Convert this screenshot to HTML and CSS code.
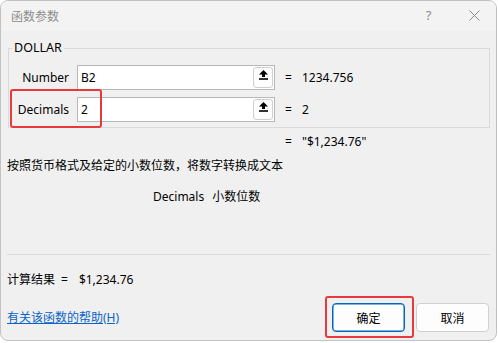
FILE: index.html
```html
<!DOCTYPE html>
<html lang="zh-CN">
<head>
<meta charset="utf-8">
<title>函数参数</title>
<link rel="stylesheet" href="styles.css">
</head>
<body>
<div class="window">
  <div class="titlebar">
    <div class="title">函数参数</div>
    <div class="controls">
      <div class="ctl help">?</div>
      <div class="ctl close">
        <svg width="11" height="11" viewBox="0 0 11 11"><path d="M0.5 0.5 L10.5 10.5 M10.5 0.5 L0.5 10.5" stroke="#8c8c8c" stroke-width="1" fill="none"/></svg>
      </div>
    </div>
  </div>
  <div class="content">
    <fieldset class="group">
      <legend>DOLLAR</legend>
      <div class="arg-row">
        <div class="arg-label">Number</div>
        <div class="arg-input"><span class="arg-text">B2</span>
          <span class="ref-btn"><svg width="9" height="10" viewBox="0 0 9 10"><polygon points="4.5,0 9,4.5 6,4.5 6,7 3,7 3,4.5 0,4.5" fill="#000"/><rect x="0" y="8.2" width="9" height="1.6" fill="#000"/></svg></span>
        </div>
        <span class="eq">=</span><span class="arg-val">1234.756</span>
      </div>
      <div class="arg-row">
        <div class="arg-label">Decimals</div>
        <div class="arg-input"><span class="arg-text">2</span>
          <span class="ref-btn"><svg width="9" height="10" viewBox="0 0 9 10"><polygon points="4.5,0 9,4.5 6,4.5 6,7 3,7 3,4.5 0,4.5" fill="#000"/><rect x="0" y="8.2" width="9" height="1.6" fill="#000"/></svg></span>
        </div>
        <span class="eq">=</span><span class="arg-val">2</span>
        <div class="mark mark-decimals"></div>
      </div>
    </fieldset>
    <div class="formula-result"><span class="eq">=</span><span>"$1,234.76"</span></div>
    <div class="desc">按照货币格式及给定的小数位数，将数字转换成文本</div>
    <div class="arg-desc"><span>Decimals</span><span>小数位数</span></div>
    <div class="sep"></div>
    <div class="calc"><span>计算结果</span><span>=</span><span class="calc-val">$1,234.76</span></div>
    <div class="footer">
      <a class="help-link" href="#">有关该函数的帮助(H)</a>
      <div class="buttons">
        <button class="btn btn-ok">确定<span class="mark mark-ok"></span></button>
        <button class="btn">取消</button>
      </div>
    </div>
  </div>
</div>
</body>
</html>
```

FILE: styles.css
```css
html, body {
  margin: 0;
  padding: 0;
  background: #ffffff;
}
.window {
  width: 497px;
  height: 341px;
  box-sizing: border-box;
  border: 1px solid #c2c2c2;
  border-radius: 8px;
  background: #f0f0f0;
  overflow: hidden;
  font-family: "Noto Sans", "Noto Sans CJK SC", sans-serif;
  font-size: 12px;
  color: #000;
}
.titlebar {
  height: 30px;
  background: #f3f3f3;
  display: flex;
  align-items: center;
  justify-content: space-between;
}
.title {
  padding-left: 10px;
  color: #8c8c8c;
  font-family: "Noto Sans CJK SC", sans-serif;
  font-size: 12px;
  line-height: 16px;
}
.controls {
  display: flex;
  height: 30px;
}
.ctl {
  width: 45px;
  height: 30px;
  display: flex;
  align-items: center;
  justify-content: center;
  color: #8c8c8c;
}
.help {
  font-size: 13px;
  padding-bottom: 2px;
  box-sizing: border-box;
}
.close {
  padding-left: 2px;
  box-sizing: border-box;
}
.close svg {
  margin-top: -2px;
}
.content {
  padding: 0;
}
.group {
  margin: 9px 6px 0 7px;
  padding: 9px 0 5px 3px;
  border: 1px solid #dadada;
  border-radius: 0;
  min-width: 0;
}
.group legend {
  padding: 0 2px;
  font-size: 12.5px;
  line-height: 16px;
}
.arg-row {
  position: relative;
  display: flex;
  align-items: center;
  height: 25px;
}
.arg-row + .arg-row {
  margin-top: 7px;
}
.arg-label {
  width: 57px;
  text-align: right;
  line-height: 16px;
}
.arg-input {
  margin-left: 8px;
  width: 198px;
  height: 25px;
  box-sizing: border-box;
  border: 1px solid #b8b8b8;
  background: #fff;
  display: flex;
  align-items: center;
  justify-content: space-between;
  padding-left: 3px;
  padding-right: 1px;
}
.arg-text {
  line-height: 16px;
}
.ref-btn {
  width: 20px;
  height: 21px;
  box-sizing: border-box;
  border: 1px solid #cfcfcf;
  border-radius: 3px;
  background: #fdfdfd;
  display: flex;
  align-items: flex-start;
  justify-content: center;
  padding-top: 2px;
}
.eq {
  display: inline-block;
  width: 17px;
  margin-left: 10px;
}
.arg-val {
  line-height: 16px;
}
.mark {
  position: absolute;
  border: 2px solid #e8393e;
  border-radius: 3px;
  box-sizing: border-box;
  pointer-events: none;
}
.mark-decimals {
  left: -2px;
  top: -8px;
  width: 92px;
  height: 39px;
}
.formula-result {
  margin: 6px 0 0 274px;
  line-height: 16px;
  display: flex;
}
.desc {
  margin: 8px 0 0 6px;
  line-height: 16px;
}
.arg-desc {
  margin: 15px 0 0 152px;
  line-height: 16px;
  display: flex;
  gap: 8px;
}
.sep {
  margin: 49px 6px 0 6px;
  height: 1px;
  background: #d9d9d9;
}
.calc {
  margin: 17px 0 0 6px;
  line-height: 16px;
  display: flex;
  gap: 6px;
}
.calc-val {
  margin-left: 5px;
}
.footer {
  margin-top: 15px;
  padding: 0 7px 0 6px;
  display: flex;
  align-items: center;
  justify-content: space-between;
}
.help-link {
  color: #0a64c8;
  text-decoration: underline;
  line-height: 16px;
}
.buttons {
  display: flex;
  gap: 11px;
}
.btn {
  position: relative;
  width: 73px;
  height: 29px;
  box-sizing: border-box;
  border: 1px solid #d0d0d0;
  border-radius: 4px;
  background: #fdfdfd;
  font-family: "Noto Sans CJK SC", sans-serif;
  font-size: 12px;
  color: #000;
  padding: 0;
}
.btn-ok {
  border: 1px solid #0067c0;
  box-shadow: inset 0 0 0 0.5px #0067c0;
}
.mark-ok {
  left: -8px;
  top: -8px;
  width: 89px;
  height: 42px;
}
```
